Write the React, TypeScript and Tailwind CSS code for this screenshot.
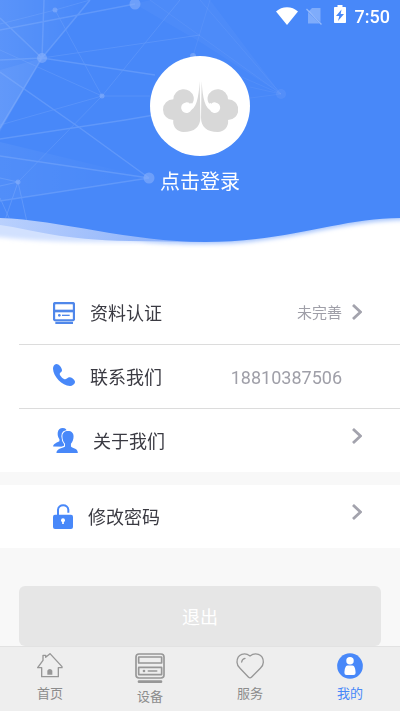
import type { ReactNode } from "react";

const FONT = "font-['Roboto','Noto_Sans_CJK_SC',sans-serif]";

function HeaderArt() {
  return (
    <svg
      className="col-start-1 row-start-1 h-[256px] w-full"
      viewBox="0 0 400 256"
      preserveAspectRatio="none"
      aria-hidden="true"
    >
      <defs>
        <filter id="soft" x="-5%" y="-5%" width="110%" height="115%">
          <feGaussianBlur stdDeviation="2" />
        </filter>
        <linearGradient id="haze" x1="0" y1="0" x2="1" y2="0">
          <stop offset="0" stopColor="#fff" stopOpacity="0.1" />
          <stop offset="1" stopColor="#fff" stopOpacity="0" />
        </linearGradient>
        <linearGradient id="band" x1="0" y1="0" x2="1" y2="0">
          <stop offset="0" stopColor="#b9d0fd" />
          <stop offset="1" stopColor="#86adfa" />
        </linearGradient>
        <clipPath id="wave">
          <path d="M0 0H400V218C340 218 290 242 205 242C130 242 60 220 0 218Z" />
        </clipPath>
      </defs>
      <path
        d="M-10 -10H410V220C340 220 290 244 205 244C170 244 150 243 140 240L-10 214Z"
        fill="#a9c6fc"
        filter="url(#soft)"
      />
      <path d="M-10 210V236C30 241 70 243 150 242L200 240Z" fill="#d2e1fe" filter="url(#soft)" />
      <path d="M0 216V225C35 230 60 240 130 241L200 242V230Z" fill="url(#band)" />
      <g clipPath="url(#wave)">
        <rect width="400" height="256" fill="#4888f9" />
        <path d="M0 0H92L42 58L0 130Z" fill="url(#haze)" />
        <path d="M0 70L42 58L0 132Z" fill="#fff" opacity="0.05" />
        <path d="M0 142L149 178L0 201Z" fill="url(#haze)" opacity="0.5" />
        <path d="M135 4L150 0H210L281 94L200 42Z" fill="#fff" opacity="0.03" />
        <g stroke="#9dc0ff" fill="none" opacity="0.28">
          <path
            d="M0 30L135 4M0 18L42 58L44 0M42 58L90 0M42 58L0 60M42 58L155 75M42 58L0 128"
            strokeWidth="1.5"
          />
          <path d="M0 72L80 128L149 178L0 156M149 178L0 201M0 139L125 120L160 114" strokeWidth="1.5" />
          <path d="M42 58L200 35M0 24L55 10L90 0M55 10L102 96L180 0M0 50L102 96L0 125M102 96H150M102 96L18 182" opacity="0.7" />
          <path d="M18 182L5 220M18 182L27 222M18 182L0 178M18 182L0 186M0 198L10 220" />
        </g>
        <g stroke="#9dc0ff" fill="none" opacity="0.12">
          <path d="M150 0L281 94L200 0M193 56L281 94L250 87M281 94L250 98M193 56L210 0" />
        </g>
        <g fill="#8db3fb" opacity="0.55">
          <circle cx="42" cy="58" r="5" />
          <circle cx="55" cy="10" r="2.5" />
          <circle cx="135" cy="4" r="5.5" />
          <circle cx="102" cy="96" r="2.5" />
          <circle cx="149" cy="178" r="5.5" />
          <circle cx="18" cy="182" r="2.5" />
          <circle cx="193" cy="56" r="3" />
          <circle cx="281" cy="94" r="5" opacity="0.3" />
        </g>
      </g>
    </svg>
  );
}

function StatusBar() {
  return (
    <div className="flex h-8 w-full items-center justify-end pr-2.5 text-white">
      <svg className="mr-2 h-[18px] w-[22px]" viewBox="0 0 22 18" fill="currentColor" aria-hidden="true">
        <path d="M0 4.5C6-1.2 16-1.2 22 4.5L11 18Z" />
      </svg>
      <svg className="mr-3 h-[18px] w-[16px]" viewBox="0 0 16 18" aria-hidden="true">
        <path d="M6 1H14.5V15L3 4Z M2 5V16.5H13.5Z" fill="currentColor" opacity="0.3" />
        <path d="M0.5 2L15.5 17.5" stroke="currentColor" strokeWidth="1.3" opacity="0.4" />
      </svg>
      <svg className="mr-[9px] mb-1 h-[18px] w-3" viewBox="0 0 12 18" aria-hidden="true">
        <path
          d="M3.5 0H8.5V2H11C11.6 2 12 2.4 12 3V17C12 17.6 11.6 18 11 18H1C.4 18 0 17.600 0 17V3C0 2.4 .4 2 1 2H3.5Z"
          fill="currentColor"
        />
        <path d="M7.5 4.5L2 11H5.3L4 16L10 9H6.7Z" fill="#4888f9" />
      </svg>
      <span className="pt-0.5 text-lg leading-6 font-medium">7:50</span>
    </div>
  );
}

function LotusHalf() {
  return (
    <path d="M176 95C174 125 171 170 151 182A16 16 0 1 1 147 163C149 161 151 160 153 163C158 158 159 150 158 143A31 31 0 0 0 97 150A31 31 0 0 0 97 212A31 31 0 0 0 128 248C160 248 178 232 178 205Z" />
  );
}

function Lotus() {
  return (
    <svg className="h-[51px] w-[75px]" viewBox="66 95 225 153" fill="#d8d8d8" aria-hidden="true">
      <LotusHalf />
      <g transform="translate(358 0) scale(-1 1)">
        <LotusHalf />
      </g>
    </svg>
  );
}

function CardIcon() {
  return (
    <svg className="h-[22px] w-[22px]" viewBox="39 33 66 66" fill="none" stroke="#4f87ea" aria-hidden="true">
      <rect x="42" y="36" width="60" height="52" rx="5" strokeWidth="7" />
      <path d="M42 60H102" strokeWidth="8" />
      <path d="M46 96H99" strokeWidth="6" />
      <path d="M66 73H89" strokeWidth="4" />
      <circle cx="58" cy="73" r="4" fill="#4f87ea" stroke="none" />
    </svg>
  );
}

function PhoneIcon() {
  return (
    <svg className="mb-1 h-[22px] w-[22px]" viewBox="39 222 66 66" fill="#4888f9" aria-hidden="true">
      <path d="M49 222C57 222 65 232 66 240C67 246 59 248 59 252C60 258 70 268 76 268C81 267 83 261 90 262C97 263 106 272 105 277C104 283 97 288 90 288C66 286 40 260 39 236C39 229 43 223 49 222Z" />
    </svg>
  );
}

function PeopleIcon() {
  return (
    <svg className="h-[25px] w-[25px]" viewBox="39 53 75 76" fill="#4888f9" aria-hidden="true">
      <path d="M68 53C77 53 80 57 80 64V110L39 109C39 100 50 98 58 93V87C53 81 52 73 53 66C55 57 60 53 68 53Z" />
      <path
        d="M84 62C95 62 101 68 101 78C101 88 98 95 93 101V109C99 115 114 114 114 129H49C49 115 66 115 75 109V101C70 95 67 88 67 78C67 68 73 62 84 62Z"
        stroke="#fff"
        strokeWidth="6"
        paintOrder="stroke"
      />
    </svg>
  );
}

function LockIcon() {
  return (
    <svg className="h-[25px] w-[20px]" viewBox="39 282 60 75" aria-hidden="true">
      <rect x="39" y="314" width="60" height="43" rx="6" fill="#4888f9" />
      <path d="M54 315V301C54 281 85 281 85 301V308" fill="none" stroke="#4888f9" strokeWidth="6" />
      <circle cx="69" cy="331" r="6" fill="#fff" />
      <path d="M69 332V342" stroke="#fff" strokeWidth="5" />
    </svg>
  );
}

function Chevron({ raised = false }: { raised?: boolean }) {
  return (
    <svg
      className={raised ? "mb-2.5 h-4 w-2.5" : "mb-0.5 h-4 w-2.5"}
      viewBox="0 0 10 16"
      fill="none"
      stroke="#a3a3ad"
      strokeWidth="2.8"
      aria-hidden="true"
    >
      <path d="M1 1L8.500 8L1 15" />
    </svg>
  );
}

const rowClass = "flex h-[63px] w-full items-center gap-[15px] bg-white pr-[38px] pl-[53px] text-left";

function Label({ children }: { children: ReactNode }) {
  return <span className="flex-1 pt-[3px] text-lg leading-7 text-[#3a3a42]">{children}</span>;
}

function HomeIcon() {
  return (
    <svg className="h-[25px] w-[26px]" viewBox="110 248 78 75" fill="none" stroke="#979797" strokeWidth="4" strokeLinejoin="round" aria-hidden="true">
      <path d="M124 319V292H112L128 270V255H136V261L149 250L185 289V292H174V319Z" />
      <path d="M141 313V301A8 8 0 0 1 156 301V313Z" fill="#979797" stroke="none" />
    </svg>
  );
}

function DeviceIcon() {
  return (
    <svg className="h-[30px] w-[30px]" viewBox="405 249 90 90" fill="none" stroke="#979797" strokeWidth="5" aria-hidden="true">
      <rect x="408" y="252" width="84" height="72" rx="9" />
      <rect x="416" y="261" width="69" height="18" rx="1" />
      <rect x="416" y="292" width="69" height="22" rx="1" />
      <path d="M445 303H470" strokeLinecap="round" />
      <path d="M417 335H483" strokeWidth="8" strokeLinecap="round" />
      <circle cx="432" cy="303" r="4" fill="#979797" stroke="none" />
    </svg>
  );
}

function HeartIcon() {
  return (
    <svg className="h-[26px] w-[28px]" viewBox="106 248 84 78" fill="none" stroke="#979797" strokeWidth="4" strokeLinecap="round" aria-hidden="true">
      <path d="M148 257C134 246 109 249 109 276C109 284 113 289 118 294L143 320Q148 325 153 320L179 294C184 289 188 284 188 276C188 249 162 246 148 257Z" />
      <path d="M123 275Q124 266 133 264" />
    </svg>
  );
}

function MeIcon() {
  return (
    <svg className="h-[26px] w-[26px]" viewBox="410 248 77 77" aria-hidden="true">
      <circle cx="448.5" cy="286.5" r="38" fill="#4888f9" />
      <circle cx="448.5" cy="271" r="11" fill="#fff" />
      <path d="M441 285H456C463 285 465 299 465 307Q465 313 459 313H438Q432 313 432 307C432 299 434 285 441 285Z" fill="#fff" />
    </svg>
  );
}

function Tab({ label, tall = false, active = false, children }: { label: string; tall?: boolean; active?: boolean; children: ReactNode }) {
  return (
    <a
      href="#"
      aria-current={active ? "page" : undefined}
      className={
        active
          ? "flex flex-1 flex-col items-center gap-[7px] text-[#4888f9]"
          : "flex flex-1 flex-col items-center gap-[7px] text-[#8c8c8c]"
      }
    >
      <span className={tall ? "flex h-[29px] items-start" : "flex h-[26px] items-start"}>{children}</span>
      <span className="text-[13px] leading-4">{label}</span>
    </a>
  );
}

export default function App() {
  return (
    <div className={`flex min-h-screen flex-col bg-[#f8f8f8] ${FONT}`}>
      <header className="grid bg-white pb-[25px]">
        <HeaderArt />
        <div className="col-start-1 row-start-1 flex flex-col items-center">
          <StatusBar />
          <button type="button" className="mt-6 flex flex-col items-center gap-3 text-white">
            <span className="flex h-[100px] w-[100px] items-center justify-center rounded-full bg-white">
              <Lotus />
            </span>
            <span className="text-xl leading-7">点击登录</span>
          </button>
        </div>
      </header>

      <main className="flex flex-1 flex-col">
        <div className="bg-white">
          <button type="button" className={rowClass}>
            <CardIcon />
            <Label>资料认证</Label>
            <span className="flex items-center gap-2.5">
              <span className="text-[15px] leading-6 text-[#9f9fa8]">未完善</span>
              <Chevron />
            </span>
          </button>
          <hr className="ml-[19px] border-[#dcdcdc]" />
          <a href="tel:18810387506" className={rowClass}>
            <PhoneIcon />
            <Label>联系我们</Label>
            <span className="pt-[3px] pr-5 text-lg leading-7 text-[#9f9fa8]">18810387506</span>
          </a>
          <hr className="ml-[19px] border-[#dcdcdc]" />
          <button type="button" className={rowClass}>
            <PeopleIcon />
            <Label>关于我们</Label>
            <Chevron raised />
          </button>
        </div>
        <div className="mt-[13px] bg-white">
          <button type="button" className={rowClass}>
            <LockIcon />
            <Label>修改密码</Label>
            <Chevron raised />
          </button>
        </div>
        <div className="mt-auto px-[19px] pt-8">
          <button type="button" className="h-[60px] w-full rounded-md bg-[#e6e6e6] pt-[3px] text-lg leading-7 text-white">
            退出
          </button>
        </div>
      </main>

      <nav className="flex h-[65px] border-t border-[#e2e2e2] bg-[#eeeeee] pt-1.5">
        <Tab label="首页">
          <HomeIcon />
        </Tab>
        <Tab label="设备" tall>
          <DeviceIcon />
        </Tab>
        <Tab label="服务">
          <HeartIcon />
        </Tab>
        <Tab label="我的" active>
          <MeIcon />
        </Tab>
      </nav>
    </div>
  );
}
